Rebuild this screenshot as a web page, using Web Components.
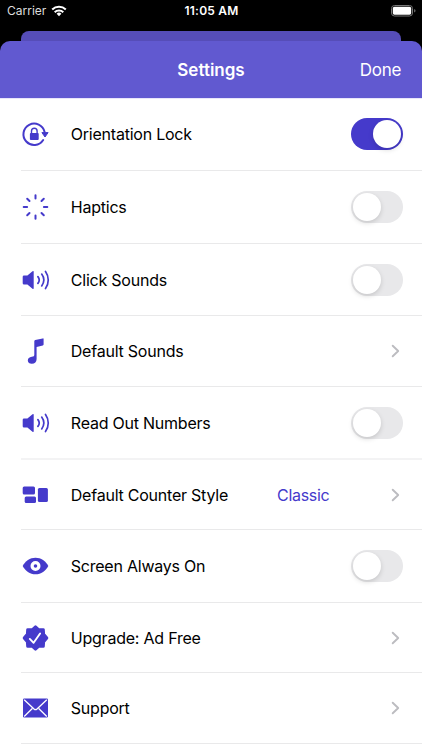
<!DOCTYPE html>
<html lang="en">
<head>
<meta charset="utf-8">
<title>Settings</title>
<style>
html, body {
  margin: 0;
  height: 100%;
  overflow: hidden;
  background: #fff;
  font-family: Inter, "Liberation Sans", sans-serif;
}
</style>
</head>
<body>

<settings-screen>
  <settings-row icon="lock" label="Orientation Lock" style="--height: 73px"><toggle-switch is-on></toggle-switch></settings-row>
  <settings-row icon="haptics" label="Haptics" style="--height: 73px"><toggle-switch></toggle-switch></settings-row>
  <settings-row icon="speaker" label="Click Sounds" style="--height: 72px"><toggle-switch></toggle-switch></settings-row>
  <settings-row icon="note" label="Default Sounds" style="--height: 71px"><chevron-link></chevron-link></settings-row>
  <settings-row icon="speaker" label="Read Out Numbers" style="--height: 73px; --line: 2px; --line-color: #f3f3f4"><toggle-switch></toggle-switch></settings-row>
  <settings-row icon="blocks" label="Default Counter Style" style="--height: 70px"><chevron-link value="Classic"></chevron-link></settings-row>
  <settings-row icon="eye" label="Screen Always On" style="--height: 73px"><toggle-switch></toggle-switch></settings-row>
  <settings-row icon="badge" label="Upgrade: Ad Free" style="--height: 70px"><chevron-link></chevron-link></settings-row>
  <settings-row icon="mail" label="Support" style="--height: 71px"><chevron-link></chevron-link></settings-row>
</settings-screen>

<script>
const icons = {
  lock: `
    <path d="M23.100 12A10.700 10.700 0 1 0 21.700 20" fill="none" stroke="currentColor" stroke-width="2" stroke-linecap="round"/>
    <path d="M20.400 12.600h6.200l-3.100 4.400z" fill="currentColor" stroke="currentColor" stroke-width="1" stroke-linejoin="round"/>
    <rect x="8.400" y="13" width="8.800" height="7" rx=".9" fill="currentColor"/>
    <path d="M10 13.400v-2.300a2.800 2.800 0 0 1 5.600 0v2.300" fill="none" stroke="currentColor" stroke-width="1.400"/>`,
  haptics: `
    <g stroke="currentColor" stroke-width="2" stroke-linecap="round">
      <path d="M14 2.200v3.400M14 22.400v3.400M2.200 14h3.400M22.400 14h3.400M5.700 5.700l2.300 2.300M20 20l2.300 2.300M22.300 5.700l-2.300 2.300M8 20l-2.300 2.300"/>
    </g>`,
  speaker: `
    <path d="M1.200 10.700q0-1.300 1.300-1.300h3.400l5.100-4.100q1.200-.8 1.200.5v16.400q0 1.300-1.200.5l-5.100-4.100H2.500q-1.300 0-1.300-1.300z" fill="currentColor"/>
    <path d="M16.400 10.600a5.500 5.500 0 0 1 0 6.800M20.200 8.100a10 10 0 0 1 0 11.800M24 5.500a14.500 14.500 0 0 1 0 17" fill="none" stroke="currentColor" stroke-width="1.700" stroke-linecap="round"/>`,
  note: `
    <path d="M12.800 4.200q0-.9.900-1.100l7.500-1.700q.9-.2.900.6v5.600q0 .7-.8.900l-6.200 1.400v12c0 3-1.700 4.900-4.800 4.900-2.300 0-4-1.300-4-3.300 0-2.200 1.500-3.300 4-3.700 1.900-.3 2.500-.7 2.500-2z" fill="currentColor"/>`,
  blocks: `
    <g fill="currentColor">
      <rect x="1.200" y="5.500" width="12.300" height="8" rx="1.500"/>
      <rect x="3.200" y="15.500" width="11.300" height="6.600" rx="1.500"/>
      <rect x="16.400" y="7" width="10" height="14" rx="1.500"/>
    </g>`,
  eye: `
    <path d="M1.200 14C3.600 9.200 8.500 5.700 14 5.700S24.400 9.200 26.800 14C24.400 18.800 19.500 22.300 14 22.300S3.600 18.800 1.200 14z" fill="currentColor"/>
    <circle cx="14" cy="14" r="3.400" fill="none" stroke="#fff" stroke-width="3.200"/>`,
  badge: `
    <path d="M14 2.900l3.300 2.900 4.500-.1.300 4.400 3.200 3.900-3.200 3.900-.3 4.400-4.500-.1-3.300 2.900-3.300-2.900-4.500.1-.3-4.400L2.700 14l3.200-3.900.3-4.400 4.500.1z" fill="currentColor" stroke="currentColor" stroke-width="3" stroke-linejoin="round"/>
    <path d="M8.300 14.900l3.800 3.900 6.500-9.300" fill="none" stroke="#fff" stroke-width="1.900" stroke-linecap="round" stroke-linejoin="round"/>`,
  mail: `
    <rect x="1.500" y="4.500" width="25" height="19" rx="1.200" fill="currentColor"/>
    <path d="M2.700 5.700l9.800 9.300q1.500 1.300 3 0l9.800-9.300M2.700 22.500l8.100-8M25.300 22.500l-8.100-8" fill="none" stroke="#fff" stroke-width="1.300"/>`
};

//settings-screen=======================================================================
const screenTemplate = document.createElement("template");
screenTemplate.innerHTML = `
<style>
:host {
  display: flex;
  flex-direction: column;
  height: 100vh;
  overflow: hidden;
}
.top {
  flex: none;
  background: #000;
  box-shadow: 0 1px #e8e6fa;
}
.behind {
  height: 10px;
  margin: 0 21px;
  border-radius: 8px 8px 0 0;
  background: #564db8;
}
</style>
<div class="top">
  <status-bar></status-bar>
  <div class="behind"></div>
  <sheet-header></sheet-header>
</div>
<slot></slot>
`;

class SettingsScreen extends HTMLElement {
  constructor() {
    super();
    this.attachShadow({ mode: "open" });
    this.shadowRoot.appendChild(screenTemplate.content.cloneNode(true));
  }
}

//status-bar============================================================================
const statusTemplate = document.createElement("template");
statusTemplate.innerHTML = `
<style>
:host {
  display: grid;
  grid-template-columns: 1fr auto 1fr;
  align-items: center;
  box-sizing: border-box;
  height: 31px;
  padding: 0 6px 9px 7px;
  color: #fff;
  font-size: 12px;
  line-height: 16px;
}
.carrier {
  display: flex;
  align-items: center;
  gap: 5px;
  color: #ddd;
}
.time {
  font-weight: 600;
  letter-spacing: .2px;
}
svg {
  display: block;
}
.battery {
  justify-self: end;
}
</style>
<div class="carrier">
  <span>Carrier</span>
  <svg width="16" height="12" viewBox="0 0 16 12" fill="none" stroke="#fff" stroke-width="2">
    <path d="M1.200 4.500a9.700 9.700 0 0 1 13.600 0M3.700 7.200a6.100 6.100 0 0 1 8.600 0"/>
    <path d="M5.600 8.700a3.500 3.500 0 0 1 4.800 0L8 11.200z" fill="#fff" stroke="none"/>
  </svg>
</div>
<div class="time">11:05 AM</div>
<svg class="battery" width="25" height="12" viewBox="0 0 25 12">
  <rect x=".5" y=".5" width="21" height="10.500" rx="3" fill="none" stroke="#777"/>
  <rect x="1.800" y="1.800" width="18.400" height="7.900" rx="1.600" fill="#fff"/>
  <path d="M23.200 4v3.500q1.300-.5 1.300-1.750T23.200 4z" fill="#777"/>
</svg>
`;

class StatusBar extends HTMLElement {
  constructor() {
    super();
    this.attachShadow({ mode: "open" });
    this.shadowRoot.appendChild(statusTemplate.content.cloneNode(true));
  }
}

//sheet-header==========================================================================
const headerTemplate = document.createElement("template");
headerTemplate.innerHTML = `
<style>
:host {
  display: grid;
  grid-template-columns: 1fr auto 1fr;
  align-items: center;
  height: 57px;
  padding: 0 21px;
  border-radius: 10px 10px 0 0;
  background: #6159d0;
  color: #fff;
  font-size: 17px;
}
.title {
  grid-column: 2;
  font-weight: 600;
}
.done {
  justify-self: end;
  letter-spacing: -.3px;
}
</style>
<span class="title">Settings</span>
<span class="done">Done</span>
`;

class SheetHeader extends HTMLElement {
  constructor() {
    super();
    this.attachShadow({ mode: "open" });
    this.shadowRoot.appendChild(headerTemplate.content.cloneNode(true));
  }
}

//settings-row==========================================================================
const rowTemplate = document.createElement("template");
rowTemplate.innerHTML = `
<style>
:host {
  display: flex;
  flex: none;
  flex-direction: column;
  height: var(--height, 71px);
  padding-left: 21px;
}
.content {
  display: flex;
  flex: 1;
  align-items: center;
  padding-right: 18.600px;
}
.line {
  height: var(--line, 1px);
  background: var(--line-color, #e9e9ea);
}
svg {
  width: 28px;
  height: 28px;
  margin-right: 21.800px;
  color: #453acb;
  overflow: visible;
}
svg > * {
  transform: translateX(.5px);
}
.label {
  flex: 1;
  font-size: 16px;
  line-height: 20px;
  letter-spacing: -.23px;
  color: #000;
  white-space: nowrap;
}
</style>
<div class="content">
  <svg viewBox="0 0 28 28"></svg>
  <span class="label"></span>
  <slot></slot>
</div>
<div class="line"></div>
`;

class SettingsRow extends HTMLElement {
  constructor() {
    super();
    this.attachShadow({ mode: "open" });
  }

  connectedCallback() {
    const templateCopy = rowTemplate.content.cloneNode(true);
    templateCopy.querySelector("svg").innerHTML = icons[this.getAttribute("icon")] ?? "";
    templateCopy.querySelector(".label").textContent = this.getAttribute("label") ?? "";
    this.shadowRoot.appendChild(templateCopy);
  }
}

//toggle-switch=========================================================================
const toggleTemplate = document.createElement("template");
toggleTemplate.innerHTML = `
<style>
:host {
  display: flex;
  box-sizing: border-box;
  width: 52px;
  height: 32px;
  padding: 2px;
  border-radius: 16px;
  background: #e8e8ea;
}
:host([is-on]) {
  justify-content: flex-end;
  background: #453acb;
}
.knob {
  width: 28px;
  height: 28px;
  border-radius: 50%;
  background: #fff;
  box-shadow: 0 2px 5px rgba(0, 0, 0, .15);
}
</style>
<div class="knob"></div>
`;

class ToggleSwitch extends HTMLElement {
  constructor() {
    super();
    this.attachShadow({ mode: "open" });
    this.shadowRoot.appendChild(toggleTemplate.content.cloneNode(true));

    this.addEventListener("click", () => this.toggleAttribute("is-on"));
  }
}

//chevron-link==========================================================================
const chevronTemplate = document.createElement("template");
chevronTemplate.innerHTML = `
<style>
:host {
  display: flex;
  align-items: center;
  gap: 62px;
  padding-right: 3px;
  font-size: 16px;
  line-height: 20px;
  letter-spacing: -.3px;
  color: #453acb;
}
</style>
<span></span>
<svg width="9" height="14" viewBox="0 0 9 14" fill="none" stroke="#bcbcc0" stroke-width="1.900" stroke-linecap="round" stroke-linejoin="round">
  <path d="M1.700 1.700L7.200 7l-5.500 5.300"/>
</svg>
`;

class ChevronLink extends HTMLElement {
  constructor() {
    super();
    this.attachShadow({ mode: "open" });
  }

  connectedCallback() {
    const templateCopy = chevronTemplate.content.cloneNode(true);
    templateCopy.querySelector("span").textContent = this.getAttribute("value") ?? "";
    this.shadowRoot.appendChild(templateCopy);
  }
}

window.customElements.define("status-bar", StatusBar);
window.customElements.define("sheet-header", SheetHeader);
window.customElements.define("settings-screen", SettingsScreen);
window.customElements.define("toggle-switch", ToggleSwitch);
window.customElements.define("chevron-link", ChevronLink);
window.customElements.define("settings-row", SettingsRow);
</script>
</body>
</html>
